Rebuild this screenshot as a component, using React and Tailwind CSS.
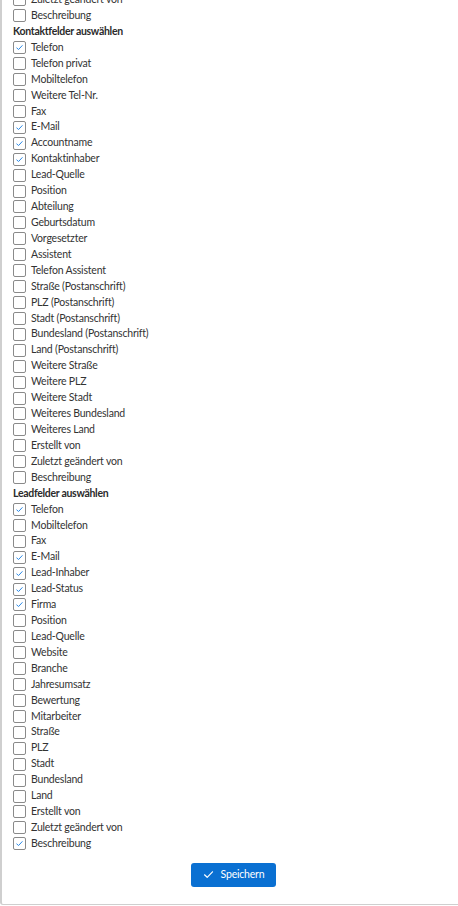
import React from "react";

const kontakt = [
  ["Telefon", true],
  ["Telefon privat", false],
  ["Mobiltelefon", false],
  ["Weitere Tel-Nr.", false],
  ["Fax", false],
  ["E-Mail", true],
  ["Accountname", true],
  ["Kontaktinhaber", true],
  ["Lead-Quelle", false],
  ["Position", false],
  ["Abteilung", false],
  ["Geburtsdatum", false],
  ["Vorgesetzter", false],
  ["Assistent", false],
  ["Telefon Assistent", false],
  ["Straße (Postanschrift)", false],
  ["PLZ (Postanschrift)", false],
  ["Stadt (Postanschrift)", false],
  ["Bundesland (Postanschrift)", false],
  ["Land (Postanschrift)", false],
  ["Weitere Straße", false],
  ["Weitere PLZ", false],
  ["Weitere Stadt", false],
  ["Weiteres Bundesland", false],
  ["Weiteres Land", false],
  ["Erstellt von", false],
  ["Zuletzt geändert von", false],
  ["Beschreibung", false],
];

const lead = [
  ["Telefon", true],
  ["Mobiltelefon", false],
  ["Fax", false],
  ["E-Mail", true],
  ["Lead-Inhaber", true],
  ["Lead-Status", true],
  ["Firma", true],
  ["Position", false],
  ["Lead-Quelle", false],
  ["Website", false],
  ["Branche", false],
  ["Jahresumsatz", false],
  ["Bewertung", false],
  ["Mitarbeiter", false],
  ["Straße", false],
  ["PLZ", false],
  ["Stadt", false],
  ["Bundesland", false],
  ["Land", false],
  ["Erstellt von", false],
  ["Zuletzt geändert von", false],
  ["Beschreibung", true],
];

function Row({ label, checked }) {
  return (
    <div className="flex items-center h-[15.93px]">
      <span className="w-[13px] h-[13px] border border-[#8a8a8a] rounded-[2px] bg-white flex items-center justify-center shrink-0">
        {checked && (
          <svg width="9" height="9" viewBox="0 0 9 9" fill="none">
            <path d="M1.8 5 L3.6 6.5 L7.2 2.6" stroke="#2b8ae8" strokeWidth="1" strokeLinecap="round" strokeLinejoin="round" />
          </svg>
        )}
      </span>
      <span className="ml-[5px] text-[10.5px] tracking-[-0.2px] text-[#333333] whitespace-nowrap">{label}</span>
    </div>
  );
}

function Header({ children }) {
  return (
    <div className="flex items-center h-[15.93px] text-[10.5px] font-bold tracking-[-0.3px] text-[#2b2b2b] whitespace-nowrap">
      {children}
    </div>
  );
}

export default function App() {
  return (
    <div
      className="w-[458px] h-[906px] bg-white overflow-hidden"
      style={{ fontFamily: 'Lato, "Noto Sans", sans-serif' }}
    >
      <div className="h-[905px] border-l-2 border-b border-[#cfcfcf] rounded-bl-[3px] overflow-hidden">
        <div className="pl-[11px] pr-[4px] -mt-[8px]">
          <Row label="Zuletzt geändert von" checked={false} />
          <Row label="Beschreibung" checked={false} />
          <Header>Kontaktfelder auswählen</Header>
          {kontakt.map(([l, c], i) => (
            <Row key={"k" + i} label={l} checked={c} />
          ))}
          <Header>Leadfelder auswählen</Header>
          {lead.map(([l, c], i) => (
            <Row key={"l" + i} label={l} checked={c} />
          ))}
          <div className="flex justify-center pt-[11px]">
            <button className="w-[85px] h-[24px] bg-[#0a70d2] rounded-[3px] flex items-center justify-center gap-[7px] text-white text-[10.5px] tracking-[-0.2px]">
              <svg width="11" height="11" viewBox="0 0 11 11" fill="none">
                <path d="M1.5 5.8 L4.2 8.3 L9.5 2.8" stroke="white" strokeWidth="1.2" strokeLinecap="round" strokeLinejoin="round" />
              </svg>
              <span>Speichern</span>
            </button>
          </div>
        </div>
      </div>
    </div>
  );
}
